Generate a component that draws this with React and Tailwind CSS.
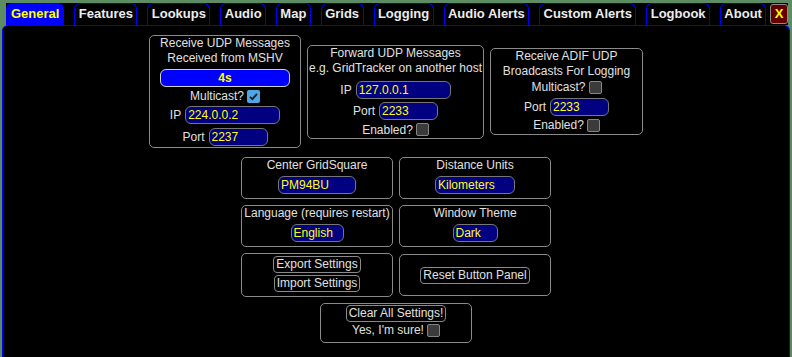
import React from "react";

function Checkbox({ checked }) {
  if (checked) {
    return (
      <span className="inline-flex items-center justify-center w-[13px] h-[13px] rounded-[2px] bg-[#4fa6e6]">
        <svg width="11" height="11" viewBox="0 0 11 11">
          <path d="M2 5.8 L4.4 8.2 L9 2.8" fill="none" stroke="#1c1c1c" strokeWidth="1.8" />
        </svg>
      </span>
    );
  }
  return <span className="inline-block w-[13px] h-[13px] rounded-[2px] border border-[#858585] bg-[#3b3b3b]" />;
}

function Field({ className, children }) {
  return (
    <div
      className={
        "h-[18px] rounded-[6px] border border-[#777] bg-[#000080] text-[#ffff00] text-[12px] leading-[16px] pl-[2px] whitespace-nowrap " +
        className
      }
    >
      {children}
    </div>
  );
}

function Btn({ children }) {
  return (
    <div className="h-[17px] px-[2px] rounded-[4px] border border-[#8a8a8a] bg-black text-[#e0e0e0] text-[12px] leading-[15px] whitespace-nowrap">
      {children}
    </div>
  );
}

function Box({ className, children }) {
  return (
    <div
      className={
        "rounded-[5px] border border-[#8a8a8a] flex flex-col items-center text-[12px] text-[#e0e0e0] " + className
      }
    >
      {children}
    </div>
  );
}

function Tab({ label, active }) {
  if (active) {
    return (
      <div className="h-[22px] px-[4px] rounded-t-[6px] border border-b-0 border-[#0000ff] bg-[#0000ff] text-[#ffff00] text-[13px] font-bold leading-[20px] whitespace-nowrap">
        {label}
      </div>
    );
  }
  return (
    <div className="h-[22px] px-[3.4px] rounded-t-[6px] border border-b-0 border-[#0000ff] bg-black text-[#ececec] text-[13px] font-bold leading-[20px] whitespace-nowrap">
      {label}
    </div>
  );
}

export default function App() {
  const tabs = [
    "General",
    "Features",
    "Lookups",
    "Audio",
    "Map",
    "Grids",
    "Logging",
    "Audio Alerts",
    "Custom Alerts",
    "Logbook",
    "About",
  ];
  return (
    <div className="w-[792px] h-[357px] overflow-hidden bg-[#5d8c63] flex flex-col pt-[3px] font-['Liberation_Sans',Arial,sans-serif]">
      <div className="flex items-end h-[22px] ml-[6px] mr-[4px] bg-black gap-[4px]">
        <div className="flex gap-[10px] h-full items-end">
          {tabs.map((t, i) => (
            <Tab key={t} label={t} active={i === 0} />
          ))}
        </div>
        <div className="self-center w-[20px] h-[20px] rounded-[3px] border border-[#8a8a8a] bg-[#640000] text-[#ffff00] text-[13px] font-bold leading-[18px] text-center">
          X
        </div>
      </div>

      <div className="flex-1 ml-[2px] mr-[2px] border border-b-0 border-[#0000ff] rounded-t-[6px] bg-black flex flex-col items-center pt-[9px]">
        {/* Row 1 */}
        <div className="flex items-center gap-[6px]">
          <Box className="w-[152px] pb-[1px]">
            <div className="leading-[15px] text-center whitespace-nowrap">
              Receive UDP Messages
              <br />
              Received from MSHV
            </div>
            <div className="mt-[3px] w-[130px] h-[18px] rounded-[6px] border border-[#d0d0d0] bg-[#0000ff] text-[#ffff00] font-bold text-center leading-[16px]">
              4s
            </div>
            <div className="mt-[1px] h-[16px] flex items-center gap-[3px]">
              <span>Multicast?</span>
              <Checkbox checked />
            </div>
            <div className="mt-[2px] flex items-center gap-[4px]">
              <span>IP</span>
              <Field className="w-[95px]">224.0.0.2</Field>
            </div>
            <div className="mt-[4px] flex items-center gap-[4px]">
              <span>Port</span>
              <Field className="w-[59px]">2237</Field>
            </div>
          </Box>

          <Box className="w-[177px]">
            <div className="leading-[15px] text-center whitespace-nowrap">
              Forward UDP Messages
              <br />
              e.g. GridTracker on another host
            </div>
            <div className="mt-[5px] flex items-center gap-[4px]">
              <span>IP</span>
              <Field className="w-[95px]">127.0.0.1</Field>
            </div>
            <div className="mt-[3px] flex items-center gap-[4px]">
              <span>Port</span>
              <Field className="w-[59px]">2233</Field>
            </div>
            <div className="mt-[2px] h-[16px] flex items-center gap-[3px]">
              <span>Enabled?</span>
              <Checkbox />
            </div>
          </Box>

          <Box className="w-[153px] pb-[1px]">
            <div className="leading-[15px] text-center whitespace-nowrap">
              Receive ADIF UDP
              <br />
              Broadcasts For Logging
            </div>
            <div className="h-[16px] flex items-center gap-[3px]">
              <span>Multicast?</span>
              <Checkbox />
            </div>
            <div className="mt-[3px] flex items-center gap-[4px]">
              <span>Port</span>
              <Field className="w-[59px]">2233</Field>
            </div>
            <div className="mt-[1px] h-[16px] flex items-center gap-[3px]">
              <span>Enabled?</span>
              <Checkbox />
            </div>
          </Box>
        </div>

        {/* Row 2 */}
        <div className="mt-[9px] flex items-center gap-[6px]">
          <Box className="w-[152px] pb-[4px]">
            <div className="leading-[15px] whitespace-nowrap">Center GridSquare</div>
            <Field className="mt-[3px] w-[78px]">PM94BU</Field>
          </Box>
          <Box className="w-[152px] pb-[4px]">
            <div className="leading-[15px] whitespace-nowrap">Distance Units</div>
            <Field className="mt-[3px] w-[80px]">Kilometers</Field>
          </Box>
        </div>

        {/* Row 3 */}
        <div className="mt-[6px] flex items-center gap-[6px]">
          <Box className="w-[152px] pb-[4px]">
            <div className="leading-[15px] whitespace-nowrap">Language (requires restart)</div>
            <Field className="mt-[3px] w-[53px]">English</Field>
          </Box>
          <Box className="w-[152px] pb-[4px]">
            <div className="leading-[15px] whitespace-nowrap">Window Theme</div>
            <Field className="mt-[3px] w-[45px]">Dark</Field>
          </Box>
        </div>

        {/* Row 4 */}
        <div className="mt-[6px] flex items-center gap-[6px]">
          <Box className="w-[152px] pt-[2px] pb-[4px] gap-[2px]">
            <Btn>Export Settings</Btn>
            <Btn>Import Settings</Btn>
          </Box>
          <Box className="w-[152px] h-[42px] justify-center">
            <Btn>Reset Button Panel</Btn>
          </Box>
        </div>

        {/* Row 5 */}
        <div className="mt-[6px] flex items-center">
          <Box className="w-[152px] pt-[1px] pb-[4px]">
            <Btn>Clear All Settings!</Btn>
            <div className="h-[16px] flex items-center gap-[3px]">
              <span>Yes, I'm sure!</span>
              <Checkbox />
            </div>
          </Box>
        </div>
      </div>
    </div>
  );
}
